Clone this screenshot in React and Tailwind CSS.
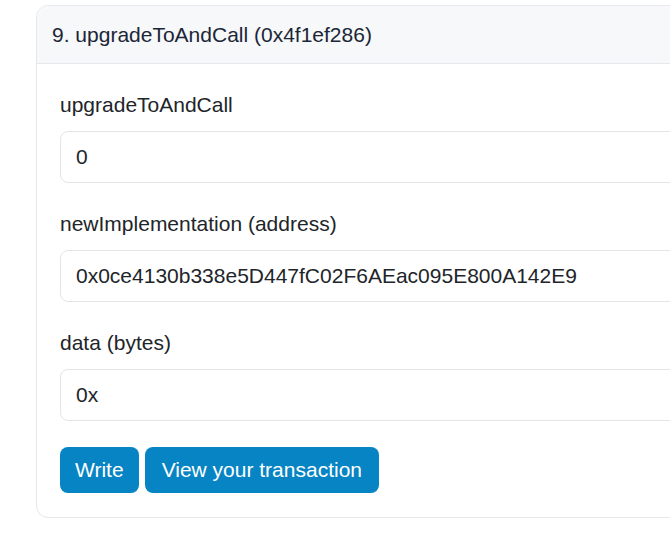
const fields = [
  { label: 'upgradeToAndCall', value: '0' },
  { label: 'newImplementation (address)', value: '0x0ce4130b338e5D447fC02F6AEac095E800A142E9' },
  { label: 'data (bytes)', value: '0x' },
];

export default function App() {
  return (
    <div className="h-[536px] w-[670px] overflow-hidden bg-white pl-[36px] pt-[5px] font-['Liberation_Sans',Arial,sans-serif] text-[21px] text-[#212529]">
      <div className="w-[700px] rounded-[12px] border border-[#e6e8eb] bg-white">
        {/* Header */}
        <div className="flex h-[58px] items-center rounded-t-[12px] border-b border-[#e6e8eb] bg-[#f7f8fa] pl-[15px] text-[#1b2636]">
          9. upgradeToAndCall (0x4f1ef286)
        </div>

        {/* Body */}
        <div className="px-[23px] pb-[24px] pt-[27px]">
          {fields.map((f) => (
            <div key={f.label} className="mb-[27px]">
              <div className="mb-[13px] leading-[27px]">{f.label}</div>
              <div className="flex h-[52px] items-center rounded-[8px] border border-[#e5e5e5] pl-[15px]">
                {f.value}
              </div>
            </div>
          ))}
          <div className="-mt-[1px] flex gap-[6px]">
            <button
              type="button"
              className="h-[46px] rounded-[8px] bg-[#0784c4] px-[15px] text-white"
            >
              Write
            </button>
            <button
              type="button"
              className="h-[46px] rounded-[8px] bg-[#0784c4] px-[17px] text-white"
            >
              View your transaction
            </button>
          </div>
        </div>
      </div>
    </div>
  );
}
